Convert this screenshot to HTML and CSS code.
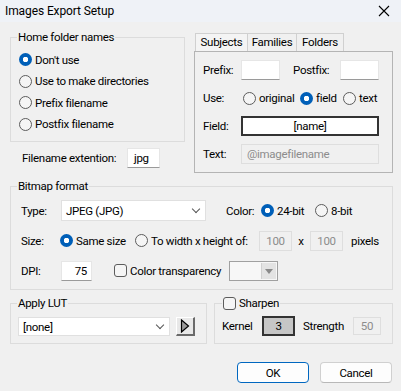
FILE: index.html
```html
<!DOCTYPE html>
<html lang="en">
<head>
    <meta charset="UTF-8">
    <title>Images Export Setup</title>
    <link rel="stylesheet" href="styles.css">
</head>
<body>
    <div class="window">
        <div class="titlebar">
            <span class="title">Images Export Setup</span>
            <svg class="close" width="12" height="12" viewBox="0 0 12 12">
                <path d="M1 1 L11 11 M11 1 L1 11" stroke="#000" stroke-width="1.1" fill="none"/>
            </svg>
        </div>
        <div class="content">
            <div class="top-row">
                <div class="left-col">
                    <fieldset class="group home-group">
                        <legend>Home folder names</legend>
                        <div class="radio-row"><span class="radio checked"></span>Don't use</div>
                        <div class="radio-row"><span class="radio"></span>Use to make directories</div>
                        <div class="radio-row"><span class="radio"></span>Prefix filename</div>
                        <div class="radio-row"><span class="radio"></span>Postfix filename</div>
                    </fieldset>
                    <div class="ext-row">
                        <span class="ext-label">Filename extention:</span>
                        <span class="textbox ext-box">jpg</span>
                    </div>
                </div>
                <div class="tabs">
                    <div class="tab-strip">
                        <span class="tab active">Subjects</span>
                        <span class="tab tab-families">Families</span>
                        <span class="tab tab-folders">Folders</span>
                    </div>
                    <div class="tab-panel">
                        <span class="lbl">Prefix:</span>
                        <div class="line">
                            <span class="textbox small-box"></span>
                            <span class="postfix-label">Postfix:</span>
                            <span class="textbox small-box"></span>
                        </div>
                        <span class="lbl">Use:</span>
                        <div class="line">
                            <span class="option opt-original"><span class="radio"></span>original</span>
                            <span class="option opt-field"><span class="radio checked"></span>field</span>
                            <span class="option"><span class="radio"></span>text</span>
                        </div>
                        <span class="lbl">Field:</span>
                        <div class="line"><span class="textbox wide-box focused">[name]</span></div>
                        <span class="lbl">Text:</span>
                        <div class="line"><span class="textbox wide-box disabled">@imagefilename</span></div>
                    </div>
                </div>
            </div>

            <fieldset class="group bitmap-group">
                <legend>Bitmap format</legend>
                <div class="bitmap-grid">
                    <span class="lbl">Type:</span>
                    <div class="line">
                        <span class="combo type-combo">JPEG (JPG)<span class="chevron"></span></span>
                        <span class="color-label">Color:</span>
                        <span class="option opt-24"><span class="radio checked"></span>24-bit</span>
                        <span class="option"><span class="radio"></span>8-bit</span>
                    </div>
                    <span class="lbl">Size:</span>
                    <div class="line">
                        <span class="option opt-same"><span class="radio checked"></span>Same size</span>
                        <span class="option opt-width"><span class="radio"></span>To width x height of:</span>
                        <span class="textbox num-box disabled">100</span>
                        <span class="times">x</span>
                        <span class="textbox num-box disabled">100</span>
                        <span class="pixels">pixels</span>
                    </div>
                    <span class="lbl">DPI:</span>
                    <div class="line">
                        <span class="textbox dpi-box">75</span>
                        <span class="option opt-transp"><span class="check"></span>Color transparency</span>
                        <span class="color-combo"><span class="drop-btn"></span></span>
                    </div>
                </div>
            </fieldset>

            <div class="bottom-row">
                <fieldset class="group lut-group">
                    <legend>Apply LUT</legend>
                    <div class="line">
                        <span class="combo lut-combo">[none]<span class="chevron"></span></span>
                        <span class="play-btn">
                            <svg width="10" height="14" viewBox="0 0 10 14">
                                <path d="M1.5 1 L8.5 7 L1.5 13 Z" fill="#9a9a9a" stroke="#000" stroke-width="1.2"/>
                            </svg>
                        </span>
                    </div>
                </fieldset>
                <fieldset class="group sharpen-group">
                    <legend><span class="check"></span>Sharpen</legend>
                    <div class="line">
                        <span class="kernel-label">Kernel</span>
                        <span class="textbox kernel-box">3</span>
                        <span class="strength-label">Strength</span>
                        <span class="textbox strength-box disabled">50</span>
                    </div>
                </fieldset>
            </div>

            <div class="buttons">
                <button class="btn default">OK</button>
                <button class="btn">Cancel</button>
            </div>
        </div>
    </div>
</body>
</html>
```

FILE: styles.css
```css
body {
    margin: 0;
    background: #f0f0f0;
    font-family: Roboto, "Noto Sans", sans-serif;
    font-size: 11.5px;
    letter-spacing: -0.3px;
    line-height: 16px;
    color: #000;
    white-space: nowrap;
}
.window {
    width: 401px;
    height: 391px;
    background: #f0f0f0;
    overflow: hidden;
}
.titlebar {
    height: 22px;
    background: #eff2f7;
    display: flex;
    align-items: center;
    justify-content: space-between;
    padding: 0 11px 0 5px;
}
.title {
    font-size: 12px;
    letter-spacing: -0.1px;
}
.content {
    padding: 7px 8px 0 10px;
}

/* group boxes */
.group {
    margin: 0;
    padding: 0;
    border: 1px solid #dcdcdc;
}
.group legend {
    margin-left: 6px;
    padding: 0 1px;
    line-height: 16px;
}

.top-row {
    display: flex;
    gap: 9px;
}
.left-col {
    width: 175px;
}
.home-group {
    padding: 4px 0 6px 0;
}
.radio-row {
    height: 21.5px;
    display: flex;
    align-items: center;
    padding-left: 8px;
}

/* radios and checks */
.radio {
    width: 11px;
    height: 11px;
    border: 1px solid #5c5c5c;
    border-radius: 50%;
    background: #f5f5f5;
    margin-right: 3px;
    flex-shrink: 0;
}
.radio.checked {
    width: 13px;
    height: 13px;
    border: none;
    background: radial-gradient(circle, #fff 0 2.5px, #005fb8 3px);
}
.check {
    display: inline-block;
    width: 11px;
    height: 11px;
    border: 1px solid #5c5c5c;
    border-radius: 3px;
    background: #f5f5f5;
    margin-right: 3px;
    flex-shrink: 0;
}
.option {
    display: flex;
    align-items: center;
}

/* text boxes */
.textbox {
    display: flex;
    align-items: center;
    box-sizing: border-box;
    height: 20px;
    background: #fff;
    border: 1px solid #e6e6e6;
    border-bottom-color: #9a9a9a;
    padding: 0 5px;
}
.textbox.disabled {
    background: #f0f0f0;
    border: 1px solid #dedede;
    color: #8c8c8c;
}
.textbox.focused {
    border: 2px solid #333;
    justify-content: center;
}

.ext-row {
    display: flex;
    align-items: center;
    margin-top: 6px;
    padding-left: 12px;
}
.ext-label {
    width: 105px;
}
.ext-box {
    width: 33px;
    padding-left: 6px;
}

/* tabs */
.tabs {
    width: 199px;
    margin-top: 4px;
}
.tab-strip {
    display: flex;
    height: 18px;
    padding-left: 1px;
}
.tab {
    box-sizing: border-box;
    width: 53px;
    border: 1px solid #d0d0d0;
    border-bottom: none;
    text-align: center;
    line-height: 17px;
}
.tab.active {
    background: #f4f4f4;
}
.tab-families {
    width: 49px;
    border-left: none;
}
.tab-folders {
    width: 47px;
    border-left: none;
}
.tab-panel {
    box-sizing: border-box;
    height: 122px;
    border: 1px solid #b4b4b4;
    padding: 8px 0 0 8px;
    display: grid;
    grid-template-columns: 38px 1fr;
    grid-auto-rows: 20px;
    row-gap: 8px;
    align-items: center;
}
.line {
    display: flex;
    align-items: center;
}
.small-box {
    width: 39px;
}
.postfix-label {
    width: 47px;
    margin-left: 13px;
}
.opt-original {
    width: 57px;
    margin-left: 2px;
}
.opt-field {
    width: 43px;
}
.wide-box {
    width: 138px;
}

/* bitmap format */
.bitmap-group {
    margin-top: 5px;
    padding: 6px 0 8px 0;
}
.bitmap-grid {
    display: grid;
    grid-template-columns: 40px 1fr;
    grid-auto-rows: 21px;
    row-gap: 9px;
    align-items: center;
    padding-left: 10px;
}
.combo {
    box-sizing: border-box;
    height: 21px;
    display: flex;
    align-items: center;
    justify-content: space-between;
    background: #fff;
    border: 1px solid #e0e0e0;
    padding: 0 6px 0 4px;
}
.chevron {
    width: 5px;
    height: 5px;
    border-right: 1px solid #555;
    border-bottom: 1px solid #555;
    transform: rotate(45deg);
    margin-bottom: 4px;
}
.type-combo {
    width: 145px;
}
.color-label {
    width: 35px;
    margin-left: 20px;
}
.opt-24 {
    width: 54px;
}
.opt-same {
    width: 75px;
    margin-left: -1px;
}
.opt-width {
    width: 124px;
}
.num-box {
    width: 33px;
    justify-content: center;
}
.times {
    width: 18px;
    text-align: center;
}
.pixels {
    margin-left: 8px;
}
.dpi-box {
    width: 31px;
    justify-content: flex-end;
    padding-right: 4px;
}
.opt-transp {
    width: 115px;
    margin-left: 22px;
}
.color-combo {
    box-sizing: border-box;
    width: 49px;
    height: 20px;
    border: 1px solid #a0a0a0;
    background: #f7f7f7;
    display: flex;
    justify-content: flex-end;
    padding: 1px;
}
.drop-btn {
    width: 14px;
    background: #e3e3e3;
    position: relative;
    border-left: 1px solid #d0d0d0;
}
.drop-btn::after {
    content: "";
    position: absolute;
    left: 3px;
    top: 6px;
    border-left: 4px solid transparent;
    border-right: 4px solid transparent;
    border-top: 5px solid #8a8a8a;
}

/* bottom row */
.bottom-row {
    display: flex;
    gap: 7px;
    margin-top: 5px;
}
.lut-group {
    width: 197px;
    box-sizing: border-box;
    padding: 6px 0 7px 0;
}
.lut-group .line,
.sharpen-group .line {
    padding-left: 7px;
}
.lut-combo {
    width: 152px;
    height: 19px;
}
.play-btn {
    box-sizing: border-box;
    width: 19px;
    height: 19px;
    margin-left: 6px;
    background: #e8e8e8;
    border-top: 1px solid #fff;
    border-left: 1px solid #fff;
    border-right: 2px solid #6a6a6a;
    border-bottom: 2px solid #6a6a6a;
    display: flex;
    align-items: center;
    justify-content: center;
}
.sharpen-group {
    width: 179px;
    box-sizing: border-box;
    padding: 5px 0 5px 0;
}
.sharpen-group legend {
    display: flex;
    align-items: center;
    margin-left: 7px;
}
.kernel-label {
    width: 40px;
}
.kernel-box {
    width: 33px;
    background: #c6c6c6;
    border: 2px solid #333;
    justify-content: center;
}
.strength-label {
    width: 50px;
    margin-left: 8px;
}
.strength-box {
    width: 28px;
    height: 18px;
    justify-content: center;
}

/* dialog buttons */
.buttons {
    display: flex;
    justify-content: flex-end;
    gap: 11px;
    margin-top: 18px;
    margin-right: 1px;
}
.btn {
    width: 72px;
    height: 21px;
    font-family: inherit;
    font-size: 11.5px;
    letter-spacing: -0.3px;
    background: #fdfdfd;
    border: 1px solid #d0d0d0;
    border-bottom-color: #b8b8b8;
    border-radius: 4px;
    padding: 0;
}
.btn.default {
    border: 1px solid #0067c0;
}
```
